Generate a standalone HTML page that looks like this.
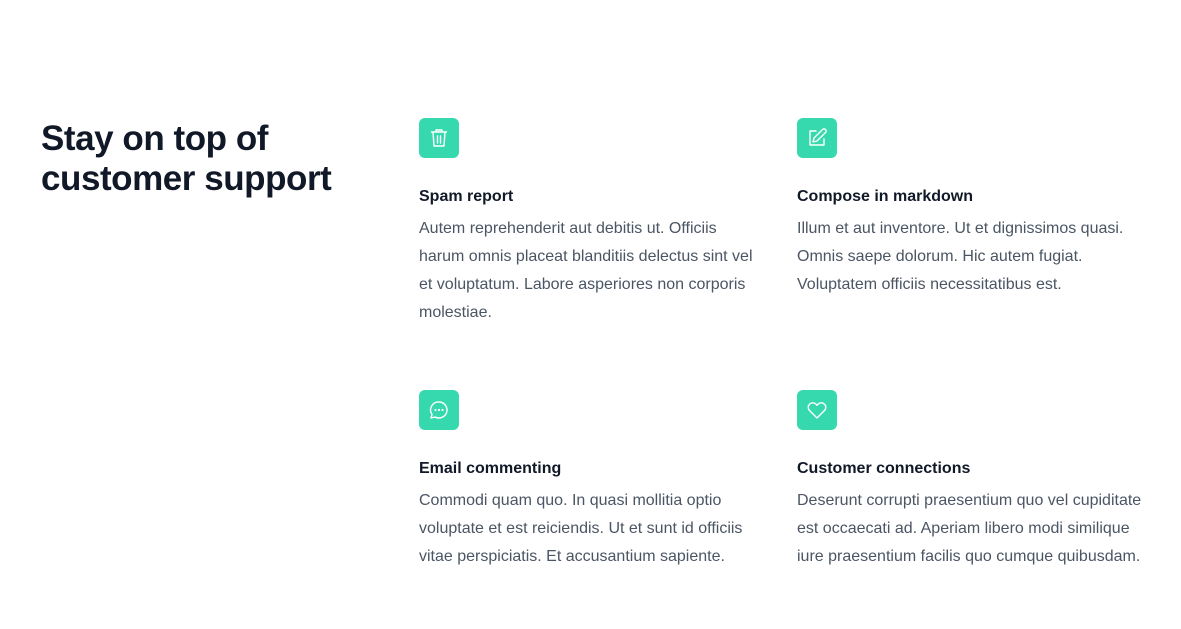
<!DOCTYPE html>
<html><head><meta charset="utf-8"><style>
*{margin:0;padding:0;box-sizing:border-box}
body{width:1181px;height:629px;background:#fff;font-family:"Liberation Sans",Arial,sans-serif;position:relative;overflow:hidden}
h2{position:absolute;left:41px;top:119px;font-size:35px;line-height:40px;font-weight:700;color:#111827;letter-spacing:-0.45px}
.f{position:absolute;width:345px}
.ic{width:40px;height:40px;border-radius:6px;background:#36d9ae;display:flex;align-items:center;justify-content:center}
.ic svg{width:24px;height:24px;fill:none;stroke:#fff;stroke-width:1.4;stroke-linecap:round;stroke-linejoin:round}
.t{margin-top:27px;font-size:16px;line-height:24px;font-weight:700;color:#111827}
.d{margin-top:6px;font-size:16px;line-height:28px;color:#4b5563}
</style></head><body>
<h2>Stay on top of<br>customer support</h2>
<div class="f" style="left:419px;top:118px">
<div class="ic"><svg viewBox="0 0 24 24"><path d="M4.5 6h15M9 6V4h6v2M6 6l1 14h10l1-14M10.5 10v7M13.5 10v7"/></svg></div>
<div class="t">Spam report</div>
<div class="d">Autem reprehenderit aut debitis ut. Officiis harum omnis placeat blanditiis delectus sint vel et voluptatum. Labore asperiores non corporis molestiae.</div>
</div>
<div class="f" style="left:797px;top:118px">
<div class="ic"><svg viewBox="0 0 24 24"><path d="M11 5H5v14h14v-6M17.5 3.5a2.1 2.1 0 013 3L12 15l-4 1 1-4z"/></svg></div>
<div class="t">Compose in markdown</div>
<div class="d">Illum et aut inventore. Ut et dignissimos quasi. Omnis saepe dolorum. Hic autem fugiat. Voluptatem officiis necessitatibus est.</div>
</div>
<div class="f" style="left:419px;top:390px">
<div class="ic"><svg viewBox="0 0 24 24"><path d="M12 4a8 8 0 110 16c-1.5 0-3-.4-4-1l-4 1 1-3.5A8 8 0 0112 4z"/><circle cx="8.5" cy="12" r=".4"/><circle cx="12" cy="12" r=".4"/><circle cx="15.5" cy="12" r=".4"/></svg></div>
<div class="t">Email commenting</div>
<div class="d">Commodi quam quo. In quasi mollitia optio voluptate et est reiciendis. Ut et sunt id officiis vitae perspiciatis. Et accusantium sapiente.</div>
</div>
<div class="f" style="left:797px;top:390px">
<div class="ic"><svg viewBox="0 0 24 24"><path d="M12 20l-7.5-7.5a4.5 4.5 0 016.5-6.3l1 1 1-1a4.5 4.5 0 016.5 6.3z"/></svg></div>
<div class="t">Customer connections</div>
<div class="d">Deserunt corrupti praesentium quo vel cupiditate est occaecati ad. Aperiam libero modi similique iure praesentium facilis quo cumque quibusdam.</div>
</div>
</body></html>
